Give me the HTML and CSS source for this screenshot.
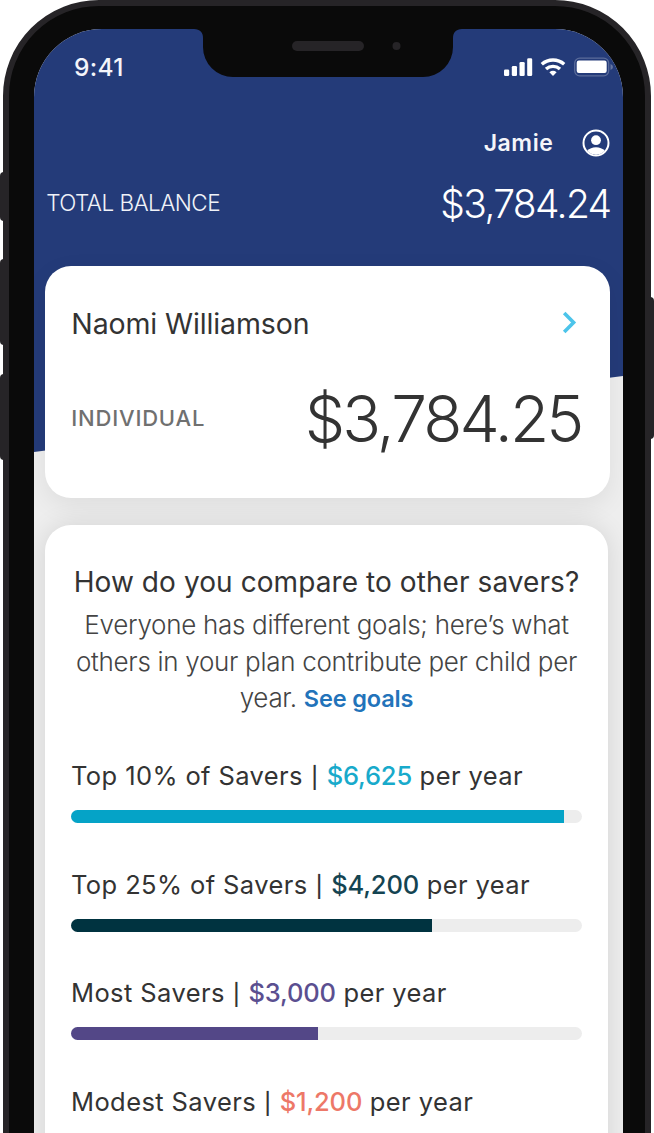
FILE: index.html
```html
<!DOCTYPE html>
<html lang="en">
<head>
<meta charset="utf-8">
<title>Savings balance</title>
<link rel="stylesheet" href="styles.css">
</head>
<body>
<div class="stage">
  <span class="key key-mute"></span>
  <span class="key key-up"></span>
  <span class="key key-down"></span>
  <span class="key key-power"></span>
  <div class="phone">
    <div class="screen">
      <div class="header-bg"></div>
      <svg class="notch" width="268" height="48" viewBox="0 0 268 48">
        <path d="M0 0C6 0 9 3.500 9 9V18A30 30 0 0 0 39 48H229A30 30 0 0 0 259 18V9C259 3.500 262 0 268 0Z" fill="#0a0a0a"/>
        <rect x="98" y="12" width="72" height="10" rx="5" fill="#262427"/>
        <circle cx="202.500" cy="17" r="4" fill="#262427"/>
      </svg>
      <div class="status">
        <span class="time">9:41</span>
        <svg class="status-icons" width="112" height="22" viewBox="0 0 112 22" fill="#fff">
          <rect x="2" y="12.500" width="5.200" height="6.500" rx="1.300"/>
          <rect x="9.800" y="9" width="5.200" height="10" rx="1.300"/>
          <rect x="17.500" y="5" width="5.200" height="14" rx="1.300"/>
          <rect x="25.200" y="1.300" width="5" height="17.700" rx="1.300"/>
          <g fill="none" stroke="#fff" stroke-width="3.400">
            <path d="M39.800 7.200A17 17 0 0 1 62.200 7.200"/>
            <path d="M44 12A10.500 10.500 0 0 1 58 12"/>
          </g>
          <path d="M47.400 15.200A6 6 0 0 1 54.600 15.200L51 19Z"/>
          <rect x="72.700" y="1.200" width="34" height="17.600" rx="5" fill="none" stroke="#fff" stroke-opacity=".25" stroke-width="1.300"/>
          <rect x="74.700" y="3.500" width="30" height="12.500" rx="2.200"/>
          <path d="M108.500 7V13Q111 12 111 10T108.500 7Z" fill-opacity=".3"/>
        </svg>
      </div>
      <div class="user">
        <span class="user-name">Jamie</span>
        <svg width="28" height="28" viewBox="0 0 28 28">
          <circle cx="14" cy="14" r="12.500" fill="none" stroke="#fff" stroke-width="2"/>
          <circle cx="14" cy="11.200" r="4.900" fill="#fff"/>
          <path d="M5.200 21.800Q8.500 18.200 14 18.200T22.800 21.800A12 12 0 0 1 5.200 21.800Z" fill="#fff"/>
        </svg>
      </div>
      <div class="total">
        <span class="total-label">TOTAL BALANCE</span>
        <span class="total-value">$3,784.24</span>
      </div>
      <section class="card account">
        <div class="account-head">
          <span class="account-name">Naomi Williamson</span>
          <svg width="16" height="24" viewBox="0 0 16 24"><path d="M2.200 2L11.600 11.500L2.200 21" fill="none" stroke="#4cc4ea" stroke-width="3.600"/></svg>
        </div>
        <div class="account-balance">
          <span class="account-type">INDIVIDUAL</span>
          <span class="account-value">$3,784.25</span>
        </div>
      </section>
      <section class="card compare">
        <h2 class="compare-title">How do you compare to other savers?</h2>
        <p class="compare-text">Everyone has different goals; here’s what<br>others in your plan contribute per child per<br>year. <a class="goals">See goals</a></p>
        <div class="tier teal">
          <div class="tier-label">Top 10% of Savers <i>|</i> <b>$6,625</b> per year</div>
          <div class="bar"><div class="fill" style="width:492.500px"></div></div>
        </div>
        <div class="tier navy">
          <div class="tier-label">Top 25% of Savers <i>|</i> <b>$4,200</b> per year</div>
          <div class="bar"><div class="fill" style="width:361px"></div></div>
        </div>
        <div class="tier purple">
          <div class="tier-label">Most Savers <i>|</i> <b>$3,000</b> per year</div>
          <div class="bar"><div class="fill" style="width:246.500px"></div></div>
        </div>
        <div class="tier coral">
          <div class="tier-label">Modest Savers <i>|</i> <b>$1,200</b> per year</div>
          <div class="bar"><div class="fill" style="width:98px"></div></div>
        </div>
      </section>
    </div>
  </div>
</div>
</body>
</html>
```

FILE: styles.css
```css
* { box-sizing: border-box; }
body { margin: 0; background: #fff; font-family: Inter, "Liberation Sans", sans-serif; }
.stage { position: relative; width: 654px; height: 1133px; overflow: hidden; padding: 0 3.500px 0 3px; }
.key { position: absolute; left: 0; width: 8px; background: #262427; border-radius: 4px 0 0 4px; }
.key-mute { top: 172px; height: 49px; }
.key-up { top: 259px; height: 86px; }
.key-down { top: 374px; height: 86px; }
.key-power { left: 646px; top: 297px; height: 142px; border-radius: 0 4px 4px 0; }
.phone { position: relative; height: 1300px; background: #0a0a0a; border: 6px solid #262427; border-radius: 96px 96px 0 0; padding: 23px 21.500px 0 25px; }
.screen { position: relative; height: 1280px; background: #eee; border-radius: 68px 68px 0 0; overflow: hidden; padding: 0 13.500px 0 11px; }
.header-bg { position: absolute; inset: 0 0 auto 0; height: 423px; background: #243b79; clip-path: polygon(0 0, 100% 0, 100% 347px, 0 423px); }
.notch { position: absolute; left: 160px; top: 0; }
.status, .user, .total, .card { position: relative; }
.status { height: 76px; padding: 28px 0 0 29px; display: flex; justify-content: space-between; }
.time { color: #f4f5fa; font-size: 24.500px; line-height: 20px; font-weight: 500; letter-spacing: .3px; }
.status-icons { flex: none; margin-right: -4px; }
.user { height: 76px; display: flex; justify-content: flex-end; align-items: center; gap: 28px; color: #f4f5fa; }
.user-name { font-size: 23px; font-weight: 600; letter-spacing: .6px; }
.total { height: 85.300px; padding-left: 1.200px; display: flex; justify-content: space-between; color: #fff; white-space: nowrap; }
.total-label { font-size: 22.500px; line-height: 43px; font-weight: 350; letter-spacing: -.55px; color: #f0f2f8; }
.total-value { font-size: 39px; line-height: 45px; font-weight: 350; letter-spacing: -1.650px; margin-right: -1px; }
.card { background: #fff; border-radius: 26px; white-space: nowrap; color: #333; }
.account { height: 232px; padding: 35px 27px 0 26.300px; box-shadow: 0 8px 26px rgba(0,0,0,.07); }
.account-head { display: flex; justify-content: space-between; align-items: center; height: 44px; padding-right: 5px; }
.account-name { font-size: 28.500px; letter-spacing: -.12px; }
.account-balance { display: flex; justify-content: space-between; height: 100px; padding-top: 22px; }
.account-type { font-size: 22px; font-weight: 500; color: #707070; line-height: 103px; letter-spacing: .8px; }
.account-value { font-size: 64px; font-weight: 300; line-height: 104px; letter-spacing: -2.850px; margin-right: 1px; }
.compare { width: 563px; height: 800px; margin-top: 26.700px; padding: 37px 26px 0; box-shadow: 0 0 26px rgba(0,0,0,.11); }
.compare-title { margin: 0; font-size: 28px; font-weight: 400; line-height: 41px; text-align: center; letter-spacing: .08px; }
.compare-text { margin: 4px 0 0; font-size: 26px; font-weight: 300; line-height: 36.600px; text-align: center; color: #444; letter-spacing: -.3px; }
.goals { font-size: 23.500px; font-weight: 600; color: #2273ba; letter-spacing: -.15px; }
.tier { height: 108.600px; }
.teal { margin-top: 38.300px; }
.tier-label { font-size: 25.500px; line-height: 40px; height: 54px; letter-spacing: .4px; }
.tier-label i { display: inline-block; width: 8.500px; font-style: normal; font-size: 21px; font-weight: 500; line-height: 20px; text-align: center; }
.tier-label b { font-weight: 550; letter-spacing: -.15px; }
.bar { height: 13px; width: 510.500px; border-radius: 7px; background: #ededed; overflow: hidden; }
.fill { height: 100%; }
.teal b { color: #18aacb; }
.teal .fill { background: #05a3c7; }
.navy b { color: #144452; }
.navy .fill { background: #003340; }
.purple b { color: #5b4f90; }
.purple .fill { background: #534787; }
.coral b { color: #ed7868; }
.coral .fill { background: #ed7868; }
```
